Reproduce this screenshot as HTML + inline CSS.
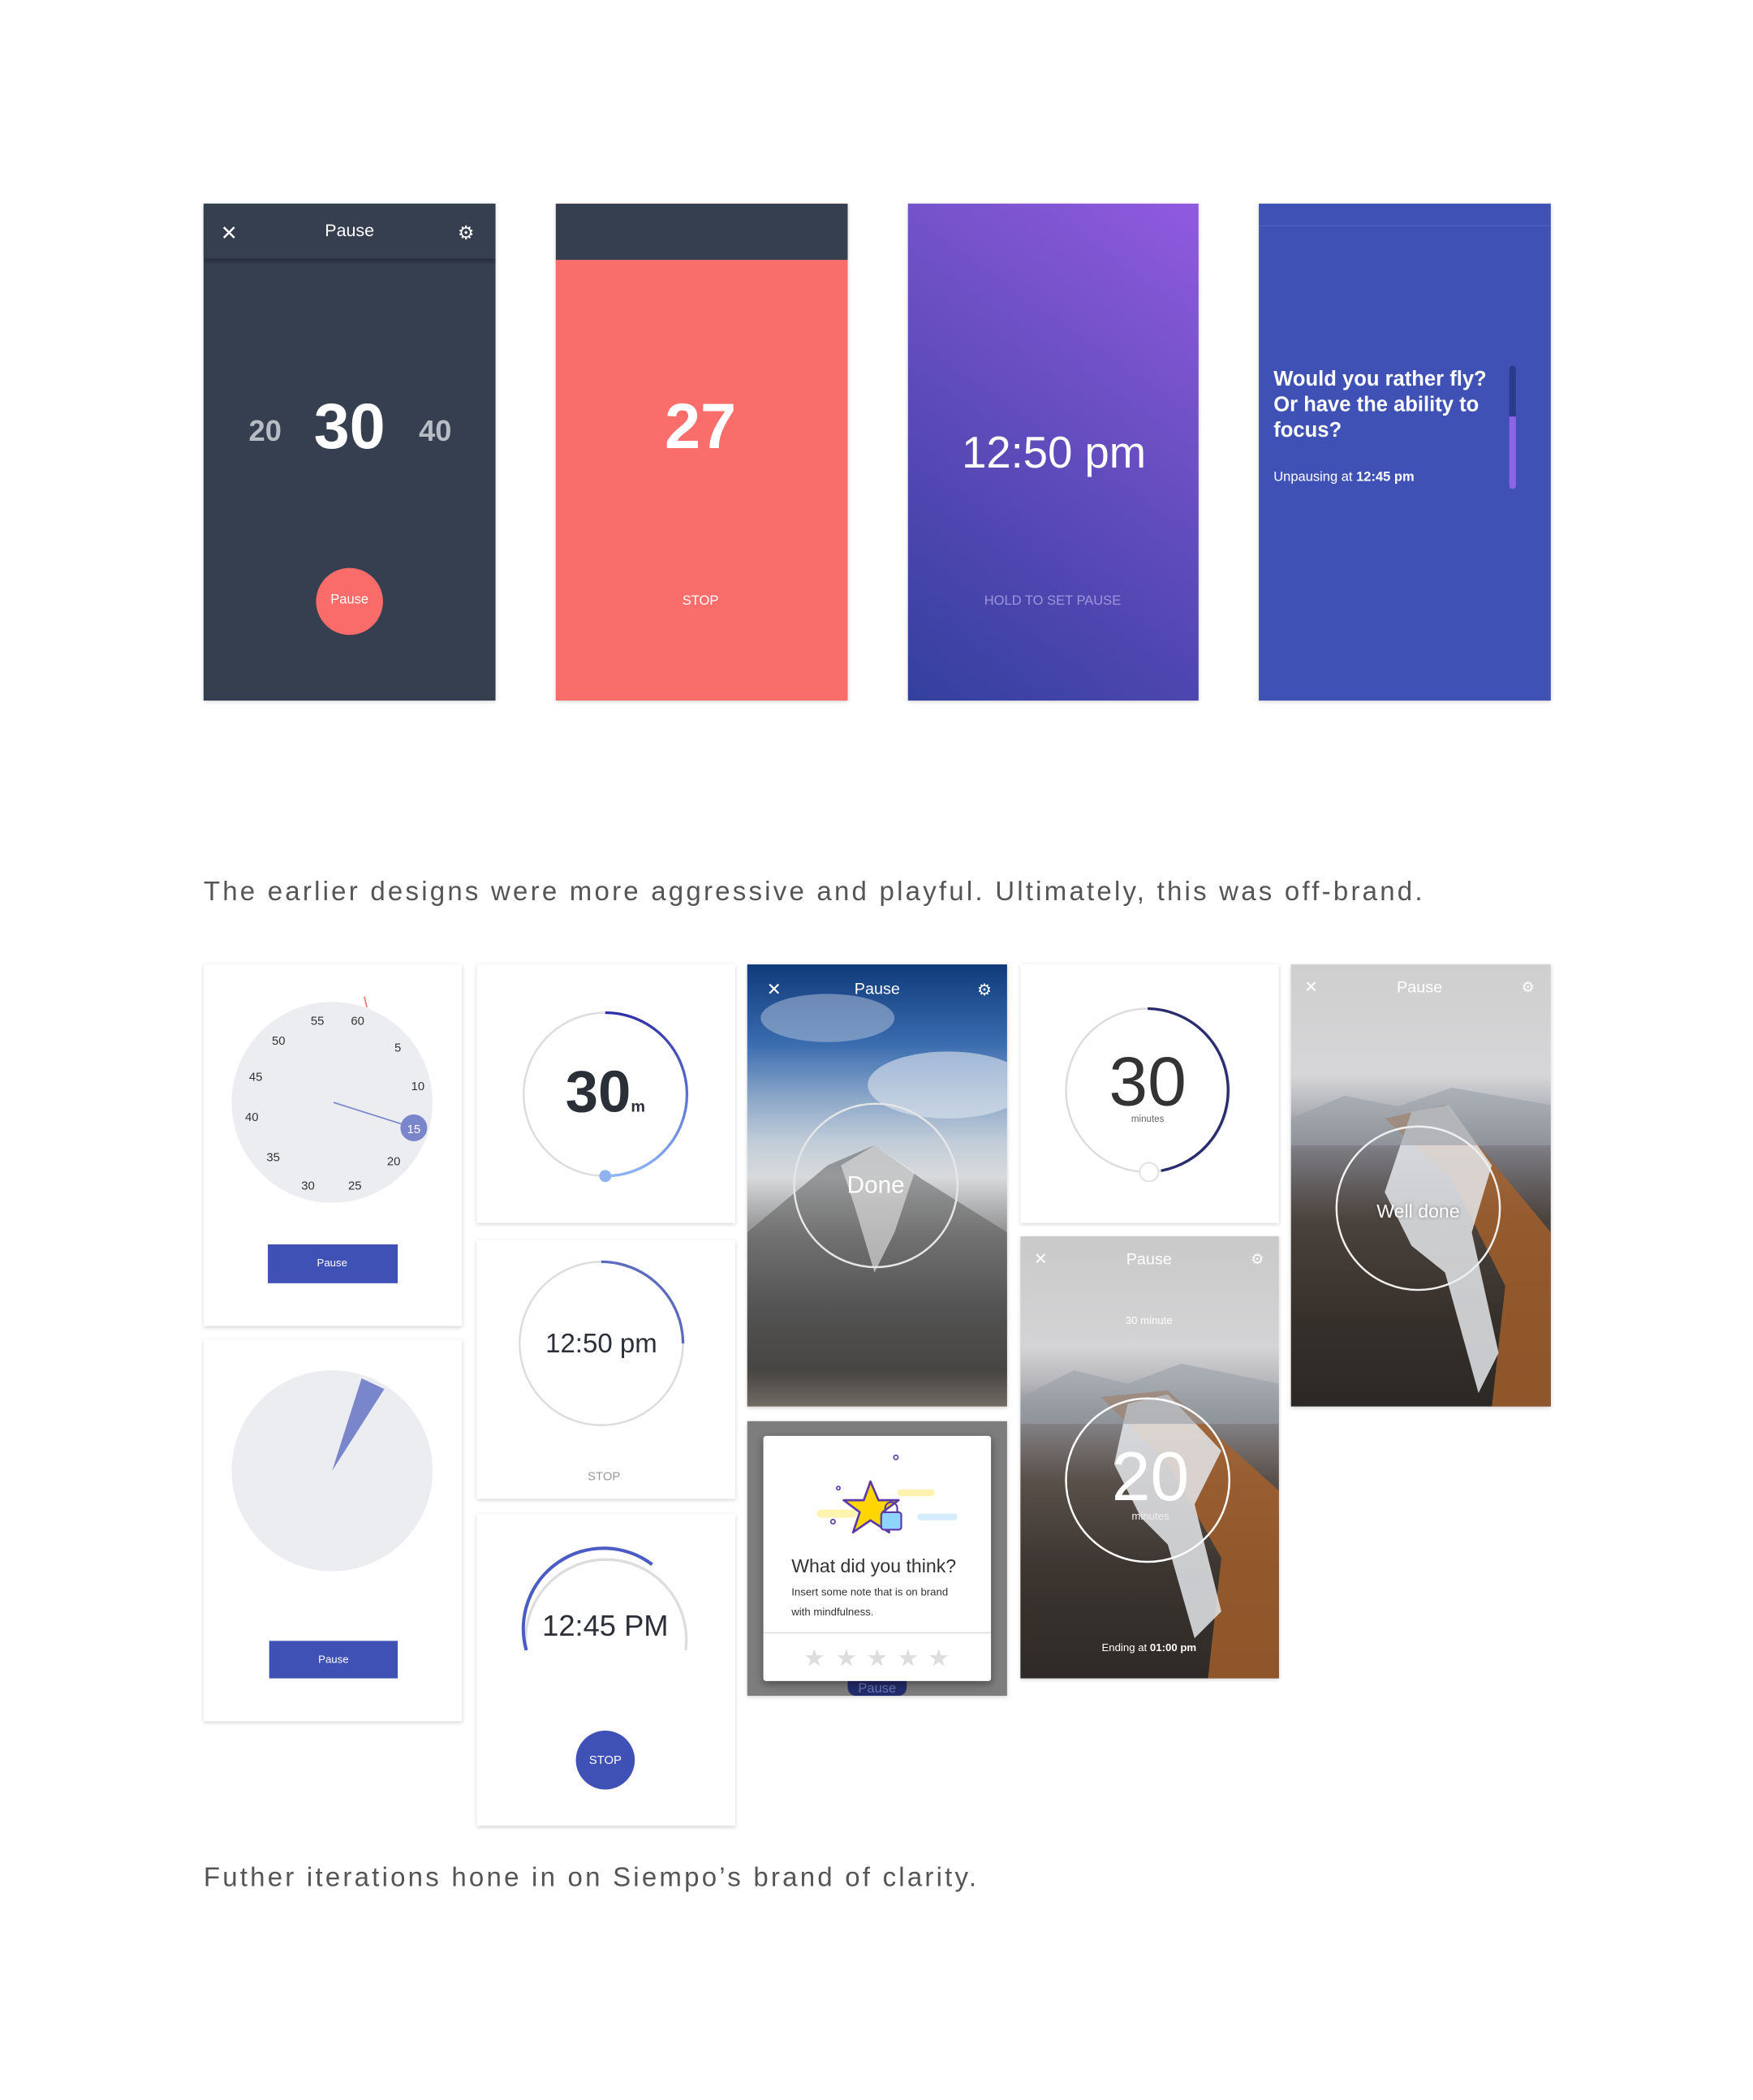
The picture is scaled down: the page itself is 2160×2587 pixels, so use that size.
<!DOCTYPE html>
<html><head><meta charset="utf-8">
<style>
html,body{margin:0;padding:0;background:#fff;width:2160px;height:2587px;overflow:hidden}
#w{position:absolute;left:0;top:0;width:1309px;height:1568px;transform:scale(1.65011);transform-origin:0 0;font-family:"Liberation Sans",sans-serif}
.a{position:absolute}
.card{position:absolute;box-shadow:0 1px 3px rgba(0,0,0,.18);overflow:hidden}
.t{position:absolute;white-space:nowrap;transform:translate(-50%,-50%)}
.cap{position:absolute;left:152px;font-size:20px;color:#555;letter-spacing:1.95px;white-space:nowrap}
.wc{background:#fff}
svg{position:absolute;left:0;top:0}
</style></head><body><div id="w">

<!-- top row -->
<div class="card" style="left:152px;top:152px;width:218px;height:371px;background:#363f50">
  <div class="a" style="left:0;top:0;width:218px;height:41px;background:#363f50;box-shadow:0 2px 3px rgba(0,0,0,.3)"></div>
  <div class="t" style="left:19px;top:22px;color:#fff;font-size:15px">✕</div>
  <div class="t" style="left:109px;top:20px;color:#fff;font-size:13px">Pause</div>
  <div class="t" style="left:196px;top:22px;color:#fff;font-size:14px">⚙</div>
  <div class="t" style="left:46px;top:170px;color:#b7bcc5;font-size:22px;font-weight:bold">20</div>
  <div class="t" style="left:109px;top:167px;color:#fff;font-size:48px;font-weight:bold">30</div>
  <div class="t" style="left:173px;top:170px;color:#b7bcc5;font-size:22px;font-weight:bold">40</div>
  <div class="a" style="left:84px;top:272px;width:50px;height:50px;border-radius:50%;background:#f96c6a"></div>
  <div class="t" style="left:109px;top:296px;color:#fff;font-size:10px">Pause</div>
</div>
<div class="card" style="left:415px;top:152px;width:218px;height:371px;background:#f96e6b">
  <div class="a" style="left:0;top:0;width:218px;height:42px;background:#363f50"></div>
  <div class="t" style="left:108px;top:167px;color:#fff;font-size:48px;font-weight:bold">27</div>
  <div class="t" style="left:108px;top:297px;color:#fff;font-size:10px">STOP</div>
</div>
<div class="card" style="left:678px;top:152px;width:217px;height:371px;background:linear-gradient(215deg,#915ae0 0%,#6a4fc2 40%,#4e46b0 70%,#33409e 100%)">
  <div class="t" style="left:109px;top:186px;color:#fff;font-size:33px">12:50 pm</div>
  <div class="t" style="left:108px;top:297px;color:#9e96db;font-size:10px">HOLD TO SET PAUSE</div>
</div>
<div class="card" style="left:940px;top:152px;width:218px;height:371px;background:#3f51b5">
  <div class="a" style="left:0;top:16px;width:218px;height:1px;background:#4a5fc6"></div>
  <div class="a" style="left:11px;top:122px;color:#fff;font-size:15.5px;font-weight:bold;line-height:19px">Would you rather fly?<br>Or have the ability to<br>focus?</div>
  <div class="a" style="left:11px;top:199px;color:#fff;font-size:10px">Unpausing at <b>12:45 pm</b></div>
  <div class="a" style="left:187px;top:121px;width:5px;height:38px;border-radius:3px 3px 0 0;background:#2c3a8e"></div>
  <div class="a" style="left:187px;top:159px;width:5px;height:54px;border-radius:0 0 3px 3px;background:#8b64e8"></div>
</div>

<div class="cap" style="top:655px">The earlier designs were more aggressive and playful. Ultimately, this was off-brand.</div>

<!-- col1 -->
<div class="card wc" style="left:152px;top:720px;width:193px;height:270px">
  <svg width="193" height="270">
    <circle cx="96" cy="103" r="75" fill="#ebedf0"/>
    <line x1="120" y1="24" x2="122" y2="32" stroke="#e57373" stroke-width="1"/>
    <line x1="97" y1="103" x2="157" y2="122" stroke="#7986cb" stroke-width="1"/>
    <circle cx="157" cy="122" r="10" fill="#7986cb"/>
    <g font-family="Liberation Sans" font-size="9" fill="#333" text-anchor="middle">
      <text x="85" y="45">55</text><text x="115" y="45">60</text><text x="56" y="60">50</text>
      <text x="145" y="65">5</text><text x="39" y="87">45</text><text x="160" y="94">10</text>
      <text x="36" y="117">40</text><text x="52" y="147">35</text><text x="142" y="150">20</text>
      <text x="78" y="168">30</text><text x="113" y="168">25</text>
      <text x="157" y="126" fill="#fff">15</text>
    </g>
  </svg>
  <div class="a" style="left:48px;top:209px;width:97px;height:29px;background:#3f51b5"></div>
  <div class="t" style="left:96px;top:223px;color:#fff;font-size:8px">Pause</div>
</div>
<div class="card wc" style="left:152px;top:1000px;width:193px;height:285px">
  <svg width="193" height="285">
    <circle cx="96" cy="98" r="75" fill="#ebedf0"/>
    <polygon points="96,98 118,29 135,37" fill="#7986cb"/>
  </svg>
  <div class="a" style="left:49px;top:225px;width:96px;height:28px;background:#3f51b5"></div>
  <div class="t" style="left:97px;top:239px;color:#fff;font-size:8px">Pause</div>
</div>

<!-- col2 -->
<div class="card wc" style="left:356px;top:720px;width:193px;height:193px">
  <svg width="193" height="193">
    <defs><linearGradient id="g1" x1="0" y1="0" x2="0" y2="1"><stop offset="0" stop-color="#2f2fa8"/><stop offset="1" stop-color="#8ab4f8"/></linearGradient></defs>
    <circle cx="96" cy="97" r="61" fill="none" stroke="#ddd" stroke-width="1.5"/>
    <path d="M96 36 A61 61 0 0 1 96 158" fill="none" stroke="url(#g1)" stroke-width="2"/>
    <circle cx="96" cy="158" r="4.5" fill="#8fb2f0"/>
  </svg>
  <div class="t" style="left:96px;top:96px;color:#2b2f38;font-size:44px;font-weight:bold">30<span style="font-size:12px">m</span></div>
</div>
<div class="card wc" style="left:356px;top:926px;width:193px;height:193px">
  <svg width="193" height="193">
    <circle cx="93" cy="77" r="61" fill="none" stroke="#ddd" stroke-width="1.5"/>
    <path d="M93 16 A61 61 0 0 1 154 77" fill="none" stroke="#5c6bc0" stroke-width="2"/>
  </svg>
  <div class="t" style="left:93px;top:78px;color:#2b2f38;font-size:20px">12:50 pm</div>
  <div class="t" style="left:95px;top:176px;color:#999;font-size:9px">STOP</div>
</div>
<div class="card wc" style="left:356px;top:1130px;width:193px;height:233px">
  <svg width="193" height="233">
    <path d="M37 102 A60 60 0 1 1 156 102" fill="none" stroke="#ddd" stroke-width="2"/>
    <path d="M37 102 A60 60 0 0 1 131 38" fill="none" stroke="#4a5bc4" stroke-width="2.5"/>
  </svg>
  <div class="t" style="left:96px;top:84px;color:#2b2f38;font-size:22px">12:45 PM</div>
  <div class="a" style="left:74px;top:162px;width:44px;height:44px;border-radius:50%;background:#3f51b5"></div>
  <div class="t" style="left:96px;top:184px;color:#fff;font-size:9px">STOP</div>
</div>

<!-- col3 -->
<div class="card" style="left:558px;top:720px;width:194px;height:330px;background:linear-gradient(180deg,#0f3a7a 0%,#3a6cb0 18%,#8aa6c8 30%,#c0ccd8 40%,#d8dadc 48%,#8a8a8a 62%,#505050 78%,#3a3530 92%,#8a7f70 100%)">
  <svg width="194" height="330">
    <ellipse cx="60" cy="40" rx="50" ry="18" fill="#b7c6da" opacity=".5"/>
    <ellipse cx="150" cy="90" rx="60" ry="25" fill="#dfe6ee" opacity=".6"/>
    <polygon points="0,200 60,150 95,135 130,160 194,200 194,330 0,330" fill="#555" opacity=".5"/>
    <polygon points="70,150 95,135 125,155 110,200 95,230 80,180" fill="#e8e8e8" opacity=".6"/>
    <circle cx="96" cy="165" r="61" fill="none" stroke="#e6e6e6" stroke-width="1.5"/>
  </svg>
  <div class="t" style="left:20px;top:19px;color:#fff;font-size:13px">✕</div>
  <div class="t" style="left:97px;top:18px;color:#fff;font-size:12px">Pause</div>
  <div class="t" style="left:177px;top:19px;color:#fff;font-size:12px">⚙</div>
  <div class="t" style="left:96px;top:165px;color:#fff;font-size:18px">Done</div>
</div>
<div class="card" style="left:558px;top:1061px;width:194px;height:205px;background:#7d7d7d">
  <div class="a" style="left:75px;top:188px;width:44px;height:17px;border-radius:6px;background:#232c6a"></div>
  <div class="t" style="left:97px;top:200px;color:#6c76b0;font-size:10px">Pause</div>
  <div class="a" style="left:12px;top:11px;width:170px;height:183px;background:#fff;border-radius:2px;box-shadow:0 2px 6px rgba(0,0,0,.4)">
    <svg width="170" height="183">
      <rect x="40" y="55" width="30" height="6" rx="3" fill="#fff3b0"/>
      <rect x="100" y="40" width="28" height="5" rx="2.5" fill="#fff3b0"/>
      <rect x="115" y="58" width="30" height="5" rx="2.5" fill="#d6ecff"/>
      <polygon points="80,34 86,48 101,48 89,57 94,72 80,63 67,72 72,57 60,48 75,48" fill="#ffd600" stroke="#5b3aa8" stroke-width="1.6" stroke-linejoin="round"/>
      <rect x="88" y="57" width="15" height="13" rx="2" fill="#8fd3ff" stroke="#5b3aa8" stroke-width="1.3"/>
      <path d="M91 57 v-3 a4.5 4.5 0 0 1 9 0 v3" fill="none" stroke="#5b3aa8" stroke-width="1.3"/>
      <circle cx="99" cy="16" r="1.6" fill="none" stroke="#5b3aa8"/>
      <circle cx="52" cy="64" r="1.6" fill="none" stroke="#5b3aa8"/>
      <circle cx="56" cy="39" r="1.3" fill="none" stroke="#5b3aa8"/>
      <line x1="0" y1="147" x2="170" y2="147" stroke="#ddd"/>
      <g fill="#ddd" font-size="18" font-family="DejaVu Sans" text-anchor="middle">
        <text x="38" y="172">★</text><text x="62" y="172">★</text><text x="85" y="172">★</text><text x="108" y="172">★</text><text x="131" y="172">★</text>
      </g>
    </svg>
    <div class="a" style="left:21px;top:89px;color:#333;font-size:14px">What did you think?</div>
    <div class="a" style="left:21px;top:109px;color:#333;font-size:8px;line-height:15px">Insert some note that is on brand<br>with mindfulness.</div>
  </div>
</div>

<!-- col4 -->
<div class="card wc" style="left:762px;top:720px;width:193px;height:193px">
  <svg width="193" height="193">
    <circle cx="95" cy="94" r="61" fill="none" stroke="#ddd" stroke-width="1.5"/>
    <path d="M95 33 A61 61 0 0 1 105 154" fill="none" stroke="#2a2a6e" stroke-width="2"/>
    <circle cx="96" cy="155" r="7" fill="#fff" stroke="#ddd"/>
  </svg>
  <div class="t" style="left:95px;top:88px;color:#333;font-size:52px;font-weight:300">30</div>
  <div class="t" style="left:95px;top:116px;color:#666;font-size:7px">minutes</div>
</div>
<div class="card" style="left:762px;top:923px;width:193px;height:330px;background:linear-gradient(180deg,#c9c9c9 0%,#d4d4d6 25%,#b7b7bb 33%,#8a8a90 40%,#5a504a 55%,#3c3530 75%,#2e2a27 100%)">
  <svg width="193" height="330">
    <polygon points="60,120 110,115 193,190 193,330 140,330 150,240 110,170" fill="#a8622c" opacity=".8"/>
    <polygon points="80,125 110,118 150,160 130,200 150,280 130,300 110,230 90,210 70,170" fill="#e4e6ea" opacity=".85"/>
    <polygon points="0,120 40,100 80,110 120,95 193,110 193,140 0,140" fill="#9aa0a8" opacity=".6"/>
    <circle cx="95" cy="182" r="61" fill="none" stroke="#fff" stroke-width="1.5"/>
  </svg>
  <div class="t" style="left:15px;top:17px;color:#fff;font-size:12px">✕</div>
  <div class="t" style="left:96px;top:17px;color:#fff;font-size:12px">Pause</div>
  <div class="t" style="left:177px;top:17px;color:#fff;font-size:11px">⚙</div>
  <div class="t" style="left:96px;top:63px;color:#fff;font-size:8px">30 minute</div>
  <div class="t" style="left:97px;top:180px;color:#fff;font-size:52px;font-weight:300">20</div>
  <div class="t" style="left:97px;top:209px;color:#eee;font-size:8px">minutes</div>
  <div class="t" style="left:96px;top:307px;color:#fff;font-size:8px">Ending at <b>01:00 pm</b></div>
</div>

<!-- col5 -->
<div class="card" style="left:964px;top:720px;width:194px;height:330px;background:linear-gradient(180deg,#cfcfd0 0%,#d6d6d8 25%,#b0b2b8 33%,#7a7a80 42%,#4a423c 58%,#36302b 80%,#2c2825 100%)">
  <svg width="194" height="330">
    <polygon points="70,115 115,105 194,200 194,330 150,330 160,240 120,160" fill="#a8622c" opacity=".8"/>
    <polygon points="90,110 118,105 150,150 135,200 155,290 140,320 115,230 90,210 70,170" fill="#e4e6ea" opacity=".85"/>
    <polygon points="0,115 40,98 80,106 120,92 194,105 194,135 0,135" fill="#9aa0a8" opacity=".6"/>
    <circle cx="95" cy="182" r="61" fill="none" stroke="#f0f0f0" stroke-width="1.5"/>
  </svg>
  <div class="t" style="left:15px;top:17px;color:#fff;font-size:12px">✕</div>
  <div class="t" style="left:96px;top:17px;color:#fff;font-size:12px">Pause</div>
  <div class="t" style="left:177px;top:17px;color:#fff;font-size:11px">⚙</div>
  <div class="t" style="left:95px;top:184px;color:#fff;font-size:14px;text-shadow:0 0 3px rgba(0,0,0,.4)">Well done</div>
</div>

<div class="cap" style="top:1391px">Futher iterations hone in on Siempo’s brand of clarity.</div>

</div></body></html>
